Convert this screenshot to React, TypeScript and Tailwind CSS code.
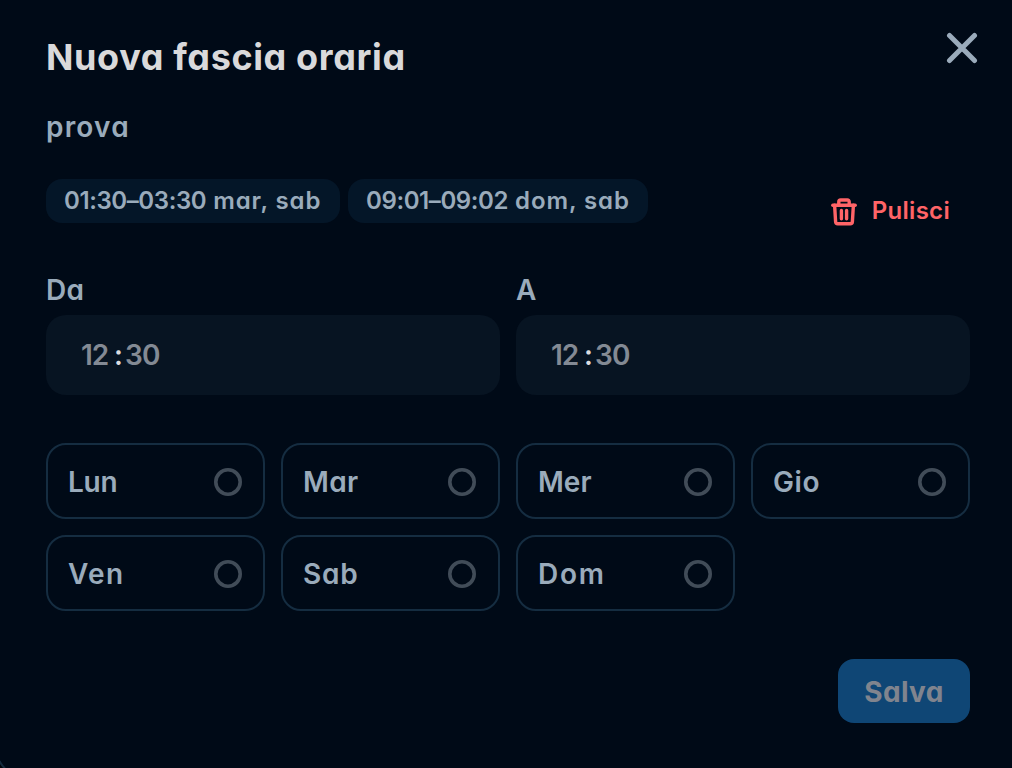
import { useState } from "react";

interface TimeFieldProps {
  label: string;
  hours: string;
  minutes: string;
}

const slots = [
  { time: "01:30–03:30", days: "mar, sab", width: "w-[294px]", tracking: "tracking-[0.9px]" },
  { time: "09:01–09:02", days: "dom, sab", width: "w-[300px]", tracking: "tracking-[0.9px]" },
];

const days = [
  { label: "Lun", tracking: "tracking-[-0.3px]", mark: "mr-[21px]" },
  { label: "Mar", tracking: "tracking-[0.4px]", mark: "mr-[22px]" },
  { label: "Mer", tracking: "tracking-[0px]", mark: "mr-[21px]" },
  { label: "Gio", tracking: "tracking-[0.6px]", mark: "mr-[22px]" },
  { label: "Ven", tracking: "tracking-[1.3px]", mark: "mr-[21px]" },
  { label: "Sab", tracking: "tracking-[0.8px]", mark: "mr-[22px]" },
  { label: "Dom", tracking: "tracking-[1.7px]", mark: "mr-[21px]" },
];

function TrashIcon() {
  return (
    <svg width="28" height="30" viewBox="0 0 28 30" fill="none" stroke="currentColor" strokeWidth="3.4" strokeLinecap="round" strokeLinejoin="round">
      <path d="M2.8 8.2h22.4" />
      <path d="M8.8 8V4.8a1.8 1.8 0 0 1 1.8-1.8h6.8a1.8 1.8 0 0 1 1.8 1.8V8" />
      <path d="M4.6 8.2l1 16.4a2.2 2.2 0 0 0 2.2 2.1h12.4a2.2 2.2 0 0 0 2.2-2.1l1-16.4" />
      <path d="M11.4 13.5v8.3M16.6 13.5v8.3" />
    </svg>
  );
}

function TimeField({ label, hours, minutes }: TimeFieldProps) {
  return (
    <div>
      <div className="mt-px h-[26px] text-[28px] leading-[26px] tracking-[0.4px] text-[#9aabbb]">{label}</div>
      <div className="mt-3 flex h-20 items-center rounded-[20px] bg-[#071422] pl-[35px] text-[28px] leading-none text-[#838a94]">
        <span className="w-[33px] tracking-[-1.2px]">{hours}</span>
        <span className="w-[11px] text-[#dcdde0]">:</span>
        <span className="tracking-[-0.8px]">{minutes}</span>
      </div>
    </div>
  );
}

export default function App() {
  const [selected, setSelected] = useState<string[]>([]);

  const toggle = (day: string) => {
    setSelected((prev) => (prev.includes(day) ? prev.filter((d) => d !== day) : [...prev, day]));
  };

  return (
    <div className="relative h-[768px] w-[1012px] overflow-hidden bg-[#000a17] pl-[46px] pr-[42px] font-['Inter',sans-serif] font-semibold [font-feature-settings:'cv11'] [font-optical-sizing:none]">
      <header className="flex h-[87px] justify-between pt-8">
        <h2 className="mt-[3px] h-[44px] text-[36px] font-bold leading-[44px] tracking-[0.62px] text-[#d9d9db]">Nuova fascia oraria</h2>
        <button aria-label="Chiudi" className="-mr-2 h-8 w-8 text-[#9aabbb]">
          <svg width="32" height="32" viewBox="0 0 32 32" fill="none" stroke="currentColor" strokeWidth="5" strokeLinecap="round">
            <path d="M3.5 3.5l25 25M28.5 3.5l-25 25" />
          </svg>
        </button>
      </header>

      <p className="mt-[22px] h-[36px] text-[28px] leading-[36px] tracking-[1.2px] text-[#9aabbb]">prova</p>

      <div className="mt-[34px] flex h-11 gap-2 text-[24px]">
        {slots.map((slot) => (
          <span key={slot.time} className={`flex h-11 items-center gap-[7px] whitespace-nowrap rounded-2xl bg-[#041628] pl-[18px] text-[#9aabbb] ${slot.width}`}>
            <span className="tracking-[-0.4px]">{slot.time}</span>
            <span className={slot.tracking}>{slot.days}</span>
          </span>
        ))}
        <button className="ml-auto mr-5 mt-[10px] flex h-11 items-center gap-[14px] text-[#ff6467]">
          <span className="mt-[2px]">
            <TrashIcon />
          </span>
          <span className="tracking-[0.3px]">Pulisci</span>
        </button>
      </div>

      <div className="mt-[53px] grid grid-cols-2 gap-4">
        <TimeField label="Da" hours="12" minutes="30" />
        <TimeField label="A" hours="12" minutes="30" />
      </div>

      <div className="mt-12 grid grid-cols-4 gap-4">
        {days.map((day) => (
          <button
            key={day.label}
            onClick={() => toggle(day.label)}
            className="flex h-[76px] items-center justify-between rounded-[20px] border-2 border-[#152d41] pl-5 text-[28px] text-[#9aabbb]"
          >
            <span className={`mt-px ${day.tracking}`}>{day.label}</span>
            <svg className={`mt-[2px] ${day.mark}`} width="28" height="28" viewBox="0 0 28 28" stroke="#414c58" strokeWidth="3.6" fill={selected.includes(day.label) ? "#9aabbb" : "none"}>
              <circle cx="14" cy="14" r="12.2" />
            </svg>
          </button>
        ))}
      </div>

      <div className="mt-12 flex justify-end">
        <button className="h-16 w-[132px] rounded-2xl bg-[#0f4675] pt-px text-[28px] font-bold tracking-[0.3px] text-[#80848e]">Salva</button>
      </div>

      {/* rounded edge of the dialog */}
      <svg className="absolute bottom-0 left-0" width="8" height="8" viewBox="0 0 8 8" fill="none">
        <path d="M0 0Q2 4 6 8H0Z" fill="#00050b" />
        <path d="M-0.5 1Q1.5 5 5 8.5" stroke="#142b3e" strokeWidth="2" />
      </svg>
    </div>
  );
}
